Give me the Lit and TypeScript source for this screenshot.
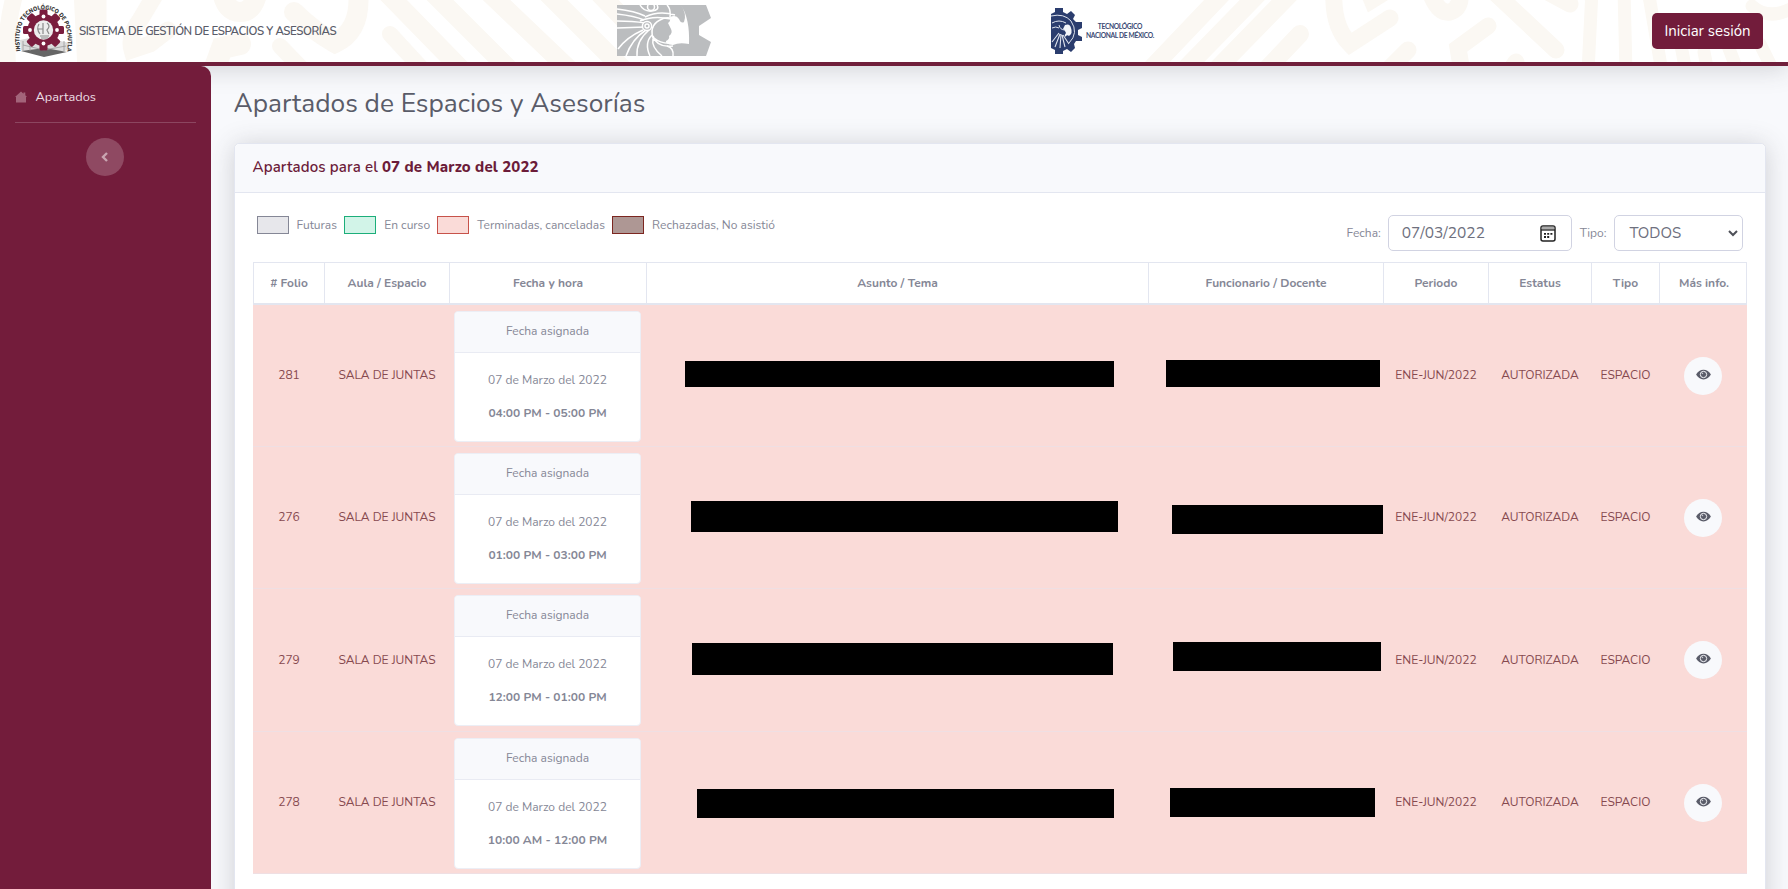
import { LitElement, html, css, svg } from "lit";
import { styleMap } from "lit/directives/style-map.js";

interface Bar { x: number; y: number; w: number; h: number }
interface Booking { folio: string; hours: string; subject: Bar; staff: Bar }

const rows: Booking[] = [
  { folio: "281", hours: "04:00 PM - 05:00 PM", subject: { x: 39, y: 56, w: 429, h: 26 }, staff: { x: 18, y: 55, w: 214, h: 27 } },
  { folio: "276", hours: "01:00 PM - 03:00 PM", subject: { x: 45, y: 54, w: 427, h: 31 }, staff: { x: 24, y: 58, w: 211, h: 29 } },
  { folio: "279", hours: "12:00 PM - 01:00 PM", subject: { x: 46, y: 54, w: 421, h: 32 }, staff: { x: 25, y: 53, w: 208, h: 29 } },
  { folio: "278", hours: "10:00 AM - 12:00 PM", subject: { x: 51, y: 57, w: 417, h: 29 }, staff: { x: 22, y: 56, w: 205, h: 29 } },
];

const legend = [
  ["future", "Futuras"],
  ["running", "En curso"],
  ["finished", "Terminadas, canceladas"],
  ["rejected", "Rechazadas, No asistió"],
];

const headings = ["# Folio", "Aula / Espacio", "Fecha y hora", "Asunto / Tema", "Funcionario / Docente", "Periodo", "Estatus", "Tipo", "Más info."];

const pattern = svg`
  <g fill="none" stroke="#fbf8f3" stroke-width="17" stroke-linecap="round">
    <path d="M16 -10Q4 30 8 70M82 -10L86 70M98 -10V70"/>
    <path d="M158 -10L140 20Q128 36 132 50L150 44L168 30"/>
    <path d="M222 -8Q226 12 240 12T258 -10" stroke-width="20"/>
    <path d="M214 70L222 48L240 44" stroke-width="22"/>
    <path d="M294 12Q312 30 335 43Q362 30 358 -10" stroke-width="20"/>
    <path d="M280 46L305 72M390 34L425 72" stroke-width="16"/>
    <path d="M382 -12L464 72M428 -12L512 72M484 -12L572 72M542 -12L626 72M594 -12L640 36" stroke-width="19"/>
    <path d="M1226 -10L1146 74M1262 -10L1180 74M1294 -10L1212 74M1300 34L1262 74" stroke-width="18"/>
    <path d="M1334 -10Q1332 26 1350 44L1390 18M1368 -10L1372 0L1388 -10"/>
    <path d="M1408 50L1386 72M1430 -8Q1438 14 1450 12Q1462 8 1460 -10"/>
    <path d="M1488 26L1458 48L1462 72M1492 -10L1556 50M1544 -10L1570 4M1516 62L1508 74"/>
    <path d="M1592 -10L1588 72M1624 -10L1626 72M1648 -10L1662 72" stroke-width="13"/>
    <path d="M1680 40L1686 72M1704 52L1708 72M1728 46L1738 72M1752 6Q1770 22 1796 6M1760 44L1774 72" stroke-width="13"/>
  </g>`;

const teeth = (n: number, cx: number, cy: number, r: number, w: number, h: number) =>
  Array.from({ length: n }, (_, i) => svg`<rect x=${cx - w / 2} y=${cy - r - h / 2} width=${w} height=${h} rx="1.5" transform="rotate(${(360 / n) * i} ${cx} ${cy})"/>`);

const campusLogo = html`<svg class="campus" viewBox="0 0 62 56">
  <defs><path id="arc" d="M6.500 48C2 20 14 6.500 29.500 6.500S57 20 53 49"/></defs>
  <path d="M6 37L25 33L55 40L54 47L30 53L7 47Z" fill="#dcdcdc"/>
  <path d="M7 48L31 45L53 49L30 54Z" fill="#666"/>
  <path d="M9 38V48M16 36V48M50 38V48M9 42L30 47L52 43" stroke="#999" fill="none" stroke-width=".8"/>
  <g fill="#7a1d3e">${teeth(8, 29.5, 27, 17, 8, 7)}<circle cx="29.500" cy="27" r="16"/></g>
  <circle cx="29.500" cy="27" r="9.700" fill="#ededed"/>
  <g fill="#fff"><circle cx="29.500" cy="13.500" r="1.900"/><circle cx="29.500" cy="40.500" r="1.900"/><circle cx="16" cy="27" r="1.900"/><circle cx="43" cy="27" r="1.900"/></g>
  <path d="M25 21Q22 26 26 31M29 20V31M33 20Q37 23 33 27L35 31M24 26H29M26 33H35M27 35H34" stroke="#8a8a8a" fill="none" stroke-width="1.200"/>
  <text class="ring"><textPath href="#arc" textLength="110" lengthAdjust="spacingAndGlyphs">INSTITUTO TECNOLÓGICO DE POCHUTLA</textPath></text>
</svg>`;

const headLogo = html`<svg class="eagle" viewBox="0 0 94 52">
  <path d="M0 0H89L94 13L82 21V30L94 37L89 51H0Z" fill="#bbbdbf"/>
  <g fill="none" stroke="#fff" stroke-width="1.500">
    <path d="M0 4Q18 6 28 11M0 9Q18 11 27 15M0 16Q16 16 28 18M0 23L28 22"/>
    <path d="M1 44Q10 32 26 25M9 51Q15 34 29 25M20 51Q19 36 32 25M33 51Q27 38 35 30M45 51Q34 42 36 34M56 51Q57 43 50 41"/>
    <path d="M28 12Q42 5 58 10M23 0Q27 7 35 6T40 0M23 16Q36 10 54 14M50 0Q54 4 53 12"/>
    <path d="M37 36Q31 21 43 15Q48 12 53 13M36 31Q40 43 56 41M37 33Q44 39 55 38"/>
    <circle cx="30" cy="21" r="4.600" fill="#bbbdbf"/><circle cx="30" cy="21" r="2"/>
    <circle cx="34" cy="2" r="3.500"/>
  </g>
  <path d="M53 12Q59 9 62 14Q64 19 67 17Q70 9 64 0Q73 14 72 39Q62 37 56 40Q48 39 49 36Q53 34 52 31Q56 28 54 24L51 18Q54 16 53 12Z" fill="#fff"/>
</svg>`;

const tecLogo = html`<svg class="gear" viewBox="0 0 31 46">
  <path d="M4 0H12V4L16 6L20 3L24 7L22 11L25 14L31 14V20L27 22V27L31 29V33L25 33L23 36L24 40L20 44L16 41L12 43V46H4V42L0 40V6L4 4Z" fill="#2b3d6e"/>
  <path d="M14 17Q19 15 20 20Q22 25 18 28Q16 26 14 29Q13 27 15 25Q14 22 12 21Z" fill="#f4f6fa"/>
  <path d="M0 8Q13 5 20 13Q28 25 18 35M8 17Q9 22 14 22M1 15Q8 11 15 15M1 20Q5 18 8 20" fill="none" stroke="#dfe4ee"/>
  <path d="M1 34L8 25M4 39L9 26M9 40L10 26M14 39L11 27M18 36L12 27" stroke="#dfe4ee" stroke-width="1.100"/>
</svg>`;

const eye = html`<svg class="eye" viewBox="0 0 576 512"><path fill="#5a5c69" d="M572.520 241.400C518.290 135.590 410.930 64 288 64S57.680 135.640 3.480 241.410a32.350 32.350 0 0 0 0 29.190C57.710 376.410 165.070 448 288 448s230.320-71.640 284.520-177.410a32.350 32.350 0 0 0 0-29.190z"/><circle cx="288" cy="256" r="125" fill="none" stroke="#f8f9fc" stroke-width="38"/><circle cx="250" cy="215" r="28" fill="#c9cad2"/></svg>`;

const calendar = html`<svg class="calendar" viewBox="0 0 16 17"><rect x="1" y="1" width="14" height="15" rx="2" fill="none" stroke="#222" stroke-width="1.500"/><path d="M1.700 1.700H14.300V4.500H1.700Z" fill="#aaa"/><path d="M1 5H15" stroke="#222" stroke-width="1.300"/><path d="M4 8.800H6M7.200 8.800H9.200M10.400 8.800H12.400M4 12H6M7.200 12H9.200" stroke="#222" stroke-width="1.800"/></svg>`;

class AppRoot extends LitElement {
  static styles = css`
    :host { display: block; height: 889px; overflow: hidden; background: #f8f9fc; color: #858796; font-family: "Nunito", "Lato", "Noto Sans", sans-serif; font-size: 12px; line-height: 18px; }
    * { box-sizing: border-box; }
    svg { display: block; }
    .page { height: 889px; display: grid; grid-template: 66px 1fr / 210.500px 1fr; background: #f8f9fc; }
    .top { grid-column: 1 / 3; height: 66px; background: #fff; border-bottom: 4px solid #701f3b; box-shadow: 0 2px 26px rgba(58, 59, 69, .22); display: grid; grid-template-columns: 617px 434px 1fr auto; align-items: center; position: relative; z-index: 1; }
    .pattern { position: absolute; inset: 0; width: 1788px; height: 62px; }
    .top > div { position: relative; display: flex; align-items: center; }
    .campus { width: 62px; height: 56px; margin: 0 3px 0 14px; overflow: visible; }
    .ring { font-size: 6.200px; font-weight: 900; fill: #3c3c3c; }
    .system { font-size: 11.500px; letter-spacing: -.43px; font-weight: 600; color: #5a5c69; white-space: nowrap; margin-top: -1px; }
    .eagle { width: 94px; height: 52px; margin-top: -1px; }
    .gear { width: 31px; height: 46px; }
    .brand { margin-left: 4px; font: 700 6.700px/9px "Lato", sans-serif; color: #3a4a74; text-align: center; letter-spacing: -.35px; white-space: nowrap; }
    .login { margin-right: 25px; height: 36px; width: 111px; border-radius: 5px; background: #721c3b; color: #fff; font-size: 15px; justify-content: center; }
    aside { background: #731c3b; border-radius: 0 10px 0 0; padding: 22px 15px 0; position: relative; z-index: 2; }
    .item { display: flex; align-items: center; gap: 8.500px; height: 18px; font-size: 12.800px; color: #ecdfe4; }
    .home { width: 12px; height: 12px; }
    .rule { height: 1px; background: #8c4660; margin: 16px 0 15px; }
    .toggle { width: 38px; height: 38px; border-radius: 50%; background: #8f4962; display: grid; place-items: center; margin: 0 auto; }
    main { padding: 0 22.500px 0 23px; }
    h1 { margin: 21px 0 23px; height: 33px; font-size: 26.300px; line-height: 33px; font-weight: 400; color: #5a5c69; white-space: nowrap; }
    .card { border: 1px solid #e3e6f0; border-radius: 5px; background: #fff; height: 900px; box-shadow: 0 2px 26px rgba(58, 59, 69, .22); }
    .title { height: 49px; background: #f8f9fc; border-bottom: 1px solid #e3e6f0; border-radius: 5px 5px 0 0; padding: 0 18px; font-size: 15px; letter-spacing: .13px; line-height: 47px; font-weight: 600; color: #6c1c39; }
    .title b { font-weight: 800; }
    .tools { height: 69px; padding: 0 22px 0 22px; display: flex; align-items: flex-start; justify-content: space-between; }
    .legend { display: flex; padding-top: 23px; }
    .legend > div { display: flex; gap: 8px; margin-right: 7.200px; white-space: nowrap; }
    .swatch { width: 32px; height: 18px; border: 1px solid; }
    .future { background: #e7e7eb; border-color: #858796; }
    .running { background: #d2f4e8; border-color: #1cae7a; }
    .finished { background: #fadbd8; border-color: #c7524a; }
    .rejected { background: #ae9794; border-color: #7c2620; }
    .filters { display: flex; align-items: center; padding-top: 22px; }
    .control { height: 36px; border: 1px solid #d1d3e2; border-radius: 5px; display: flex; align-items: center; justify-content: space-between; font-size: 15.500px; color: #6e707e; background: #fff; }
    .date { width: 184px; padding: 0 15px 0 13px; margin: 0 8px 0 7px; }
    .select { width: 129px; padding: 0 3px 0 15px; margin-left: 7px; font-size: 15px; }
    .calendar { width: 16px; height: 17px; }
    .table { width: 1494px; margin-left: 18.500px; }
    .row { display: grid; grid-template-columns: 71px 125px 197px 502px 235px 105px 103px 68px 88px; }
    .heads { height: 43px; border: 1px solid #e3e6f0; border-bottom-width: 2px; }
    .heads > div { display: grid; place-items: center; padding-bottom: 1px; border-right: 1px solid #e3e6f0; font-weight: 700; }
    .heads > div:last-child { border-right: 0; }
    .booking { height: 142.200px; background: #fadbd8; border-bottom: 1px solid #efdfe3; color: #86494f; }
    .booking > .cell { display: grid; place-items: center; padding: 0 0 1.500px 1px; white-space: nowrap; }
    .booking > .cell:last-child { padding: 0; }
    .slot { margin: 6px 5px 5px; border: 1px solid #eceef5; border-radius: 4px; background: #fff; color: #858796; text-align: center; height: 131px; }
    .slot-head { height: 41px; background: #f8f9fc; border-bottom: 1px solid #e9ebf3; border-radius: 4px 4px 0 0; line-height: 39px; }
    .slot-date { margin-top: 18px; }
    .slot-hours { margin-top: 15px; font-weight: 700; }
    .bar { background: #000; }
    .more { width: 38px; height: 38px; border-radius: 50%; background: #f8f9fc; display: grid; place-items: center; }
    .eye { width: 15px; height: 13px; margin-top: -3px; }
  `;

  private bar(b: Bar) {
    return html`<div><div class="bar" style=${styleMap({ marginLeft: `${b.x}px`, marginTop: `${b.y}px`, width: `${b.w}px`, height: `${b.h}px` })}></div></div>`;
  }

  private row(r: Booking) {
    return html`<div class="row booking">
      <div class="cell">${r.folio}</div>
      <div class="cell">SALA DE JUNTAS</div>
      <div class="slot">
        <div class="slot-head">Fecha asignada</div>
        <div class="slot-date">07 de Marzo del 2022</div>
        <div class="slot-hours">${r.hours}</div>
      </div>
      ${this.bar(r.subject)} ${this.bar(r.staff)}
      <div class="cell">ENE-JUN/2022</div>
      <div class="cell">AUTORIZADA</div>
      <div class="cell">ESPACIO</div>
      <div class="cell"><div class="more">${eye}</div></div>
    </div>`;
  }

  render() {
    return html`<div class="page">
      <header class="top">
        <svg class="pattern" viewBox="0 0 1788 62">${pattern}</svg>
        <div>${campusLogo}<span class="system">SISTEMA DE GESTIÓN DE ESPACIOS Y ASESORÍAS</span></div>
        <div>${headLogo}</div>
        <div>${tecLogo}<div class="brand">TECNOLÓGICO<br />NACIONAL DE MÉXICO.</div></div>
        <div class="login">Iniciar sesión</div>
      </header>
      <aside>
        <div class="item">
          <svg class="home" viewBox="0 0 12 12"><path d="M6 .5L8.500 2.700V1.500H10.300V4.300L12 6H11V11.500H1V6H0Z" fill="#a3647a"/></svg>
          <span>Apartados</span>
        </div>
        <div class="rule"></div>
        <div class="toggle"><svg width="8" height="10" viewBox="0 0 8 10"><path d="M6 1L2 5L6 9" fill="none" stroke="#c9a5b1" stroke-width="2.400"/></svg></div>
      </aside>
      <main>
        <h1>Apartados de Espacios y Asesorías</h1>
        <section class="card">
          <div class="title">Apartados para el <b>07 de Marzo del 2022</b></div>
          <div class="tools">
            <div class="legend">${legend.map(([k, t]) => html`<div><span class="swatch ${k}"></span><span>${t}</span></div>`)}</div>
            <div class="filters">
              <span>Fecha:</span>
              <div class="control date"><span>07/03/2022</span>${calendar}</div>
              <span>Tipo:</span>
              <div class="control select"><span>TODOS</span><svg width="12" height="8" viewBox="0 0 12 8"><path d="M2 2L6 6L10 2" fill="none" stroke="#4e5058" stroke-width="2"/></svg></div>
            </div>
          </div>
          <div class="table">
            <div class="row heads">${headings.map((h) => html`<div>${h}</div>`)}</div>
            ${rows.map((r) => this.row(r))}
          </div>
        </section>
      </main>
    </div>`;
  }
}
customElements.define("app-root", AppRoot);
